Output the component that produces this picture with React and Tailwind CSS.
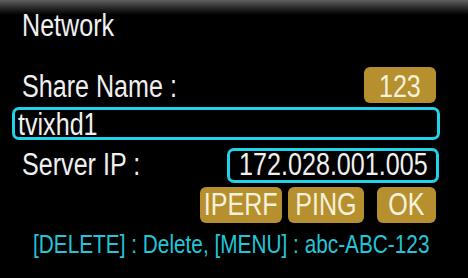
import React from "react";

const font = { fontFamily: '"Liberation Sans", Arial, sans-serif' };

function N({ children, center = false, narrow = false }) {
  return (
    <span
      className={
        "inline-block whitespace-nowrap " +
        (narrow ? "scale-x-[0.8] " : "scale-x-[0.81] ") +
        (center ? "origin-center" : "origin-left")
      }
    >
      {children}
    </span>
  );
}

function Gold({ children, className = "" }) {
  return (
    <div
      className={
        "h-[36px] rounded-[6px] bg-[#b68f2e] text-[#f6f1da] text-[31px] leading-[31px] flex items-center justify-center " +
        className
      }
    >
      <N center>{children}</N>
    </div>
  );
}

export default function App() {
  return (
    <div
      className="w-[468px] h-[278px] overflow-hidden bg-black bg-[linear-gradient(to_bottom,#606060_0px,#222_9px,#000_15px)] text-[#f0f0f0] flex flex-col"
      style={font}
    >
      <div className="pl-[22px] mt-[10px] h-[31px] text-[31px] leading-[31px]">
        <N>Network</N>
      </div>
      <div className="mt-[26px] h-[36px] flex items-center justify-between pl-[22px] pr-[32px]">
        <span className="text-[31px] leading-[31px] pt-[3px]">
          <N>Share Name :</N>
        </span>
        <Gold className="w-[72px] pt-[3px]">123</Gold>
      </div>
      <div className="mt-[4px] ml-[12px] mr-[28px] h-[33px] border-[3px] border-[#20d3e8] rounded-[7px] flex items-center pl-[3px] text-[31px] leading-[31px] pt-[2px]">
        <N>tvixhd1</N>
      </div>
      <div className="mt-[8px] h-[35px] flex items-center justify-between pl-[22px] pr-[29px]">
        <span className="text-[31px] leading-[31px] pb-[3px]">
          <N>Server IP :</N>
        </span>
        <div className="w-[212px] h-[35px] border-[3px] border-[#20d3e8] rounded-[7px] flex items-center justify-center text-[31px] leading-[31px] pb-[3px]">
          <N center>172.028.001.005</N>
        </div>
      </div>
      <div className="mt-[4px] flex justify-end pr-[32px]">
        <Gold className="w-[82px] pb-[2px]">IPERF</Gold>
        <Gold className="w-[76px] ml-[6px] pb-[2px]">PING</Gold>
        <Gold className="w-[59px] ml-[13px] pb-[2px]">OK</Gold>
      </div>
      <div className="mt-[8px] pl-[33px] text-[26px] leading-[26px] text-[#22c6d8]">
        <N narrow>[DELETE] : Delete, [MENU] : abc-ABC-123</N>
      </div>
    </div>
  );
}
